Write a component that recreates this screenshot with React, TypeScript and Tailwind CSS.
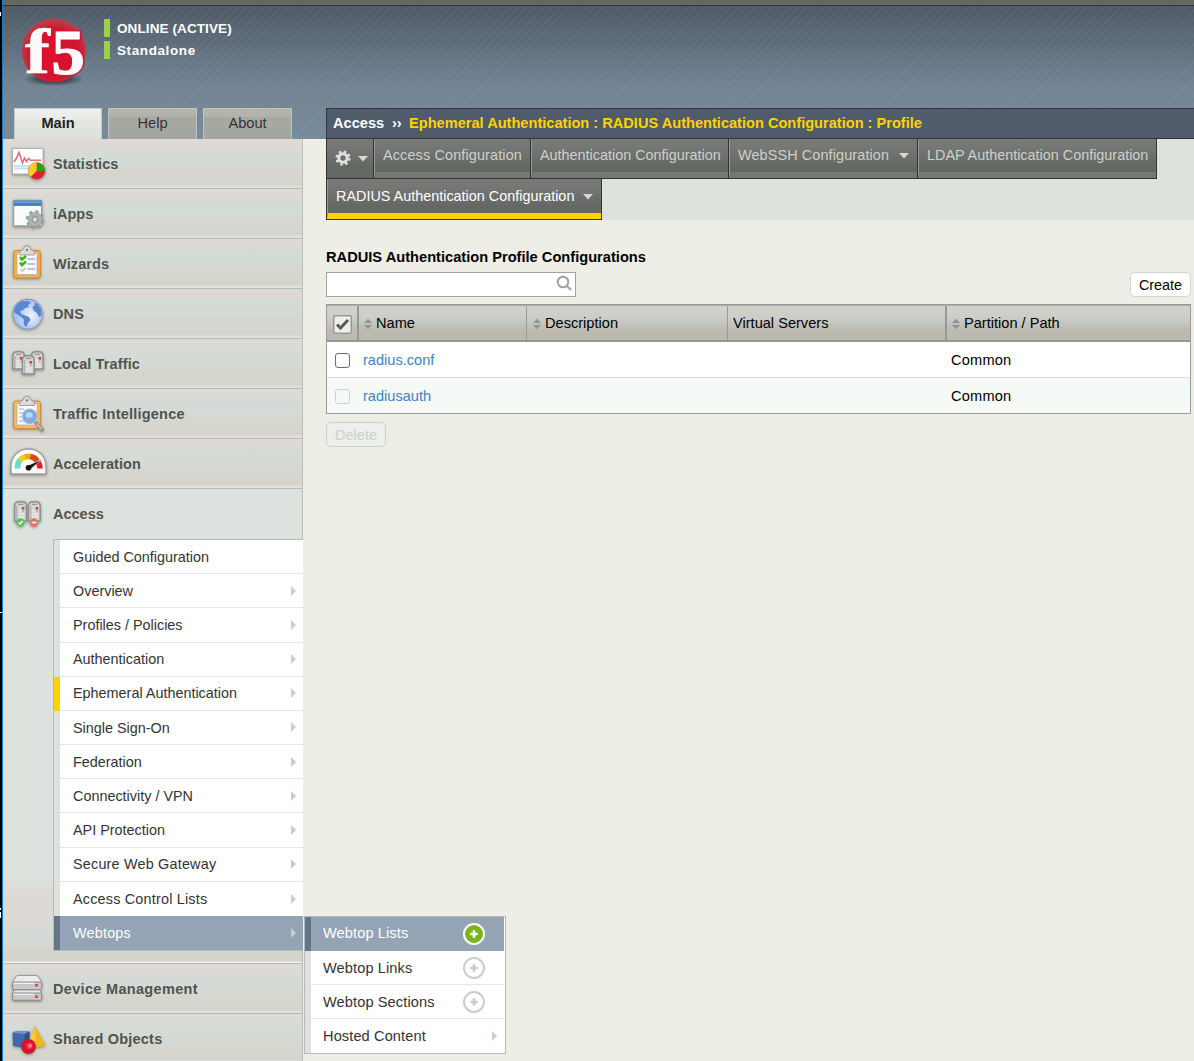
import React from "react";

const svgProps = { width: 42, height: 48, viewBox: "0 0 42 48", className: "shrink-0 drop-shadow-[0px_1px_1.5px_rgba(0,0,0,0.35)]" };

function Server({ x, y, h = 20 }: { x: number; y: number; h?: number }) {
  return (
    <g transform={`translate(${x} ${y})`}>
      <path d={`M.7 ${h} V4.5 Q1.4 .7 5 .7 H8.5 Q11.8 .7 12.4 4.5 V${h} Z`} fill="#d6d6d5" stroke="#8f8f8f" strokeWidth="1.5" />
      <path d={`M2.8 5 V${h - 1}`} stroke="#b4b4b4" strokeWidth="1.6" />
      <path d="M4 10 H9 M4 13 H10 M4 16 H10" stroke="#efefef" strokeWidth="1.2" />
      <path d="M4 3.4 H9.5" stroke="#9a9a9a" strokeWidth="1.4" />
      <rect x="7.8" y="6" width="2.6" height="2.6" fill="#ee3348" />
      <rect x="8.2" y="9.6" width="1.8" height="1.2" fill="#70c247" />
    </g>
  );
}

function Clipboard({ y = 0, frame = "#fbad42" }: { y?: number; frame?: string }) {
  return (
    <g transform={`translate(0 ${y})`}>
      <rect x="5.6" y="11.5" width="26.8" height="27.5" rx="2.5" fill={frame} stroke="#cf8a35" strokeWidth="1" />
      <path d="M9 14 H29 V35.5 H9 Z" fill="#fbfbff" stroke="#a8a7b0" strokeWidth=".7" />
      <path d="M11.5 16 V13.5 Q12.5 11.5 15 10.5 Q16 6.7 19 6.7 Q22 6.7 23 10.5 Q25.5 11.5 26.5 13.5 V16 Z" fill="#dadada" stroke="#9b9b9b" strokeWidth=".9" />
      <circle cx="19" cy="10.8" r="1.1" fill="#6b6b6b" />
    </g>
  );
}

const icons: Record<string, React.ReactNode> = {
  statistics: (
    <svg {...svgProps}>
      <rect x="4.5" y="9.5" width="30.5" height="25.5" fill="#fff" stroke="#b0b0b0" />
      <path d="M6 27 H34 M6 29.5 H34" stroke="#cde0ef" strokeWidth="1.8" />
      <path d="M6 23 L8.5 19 L11 13.5 L14.5 24 L16.5 19 L18.5 22.5 L20.5 19.5 L22.5 21.3 H33" fill="none" stroke="#e0707a" strokeWidth="1.6" />
      <circle cx="28.7" cy="32" r="8.6" fill="#dd2038" stroke="#b3a07c" strokeWidth=".6" />
      <path d="M28.7 32 V23.5 A8.5 8.5 0 0 1 37.2 32 Z" fill="#2aa316" />
      <path d="M28.7 32 V23.5 A8.5 8.5 0 0 0 22.7 38 Z" fill="#f6cc29" />
    </svg>
  ),
  iapps: (
    <svg {...svgProps}>
      <rect x="5.6" y="11.5" width="28" height="25.5" rx="1" fill="#fbfcfd" stroke="#9a9fa3" strokeWidth="1.4" />
      <path d="M5.5 11.5 H33.7 V17 H5.5 Z" fill="#4486ca" />
      <path d="M6 13 H33" stroke="#6ba7de" strokeWidth="1.4" />
      <circle cx="27" cy="30.5" r="7.9" fill="none" stroke="#93a09f" strokeWidth="2.6" strokeDasharray="3.3 2.9" />
      <circle cx="27" cy="30.5" r="7" fill="#a9b4b3" stroke="#93a09f" strokeWidth=".7" />
      <circle cx="27" cy="30.5" r="3" fill="#c3cbca" stroke="#849190" />
      <circle cx="27" cy="30.5" r="1.3" fill="#dfe4e3" />
    </svg>
  ),
  wizards: (
    <svg {...svgProps}>
      <Clipboard />
      <path d="M19.5 20 H27 M19.5 25 H27 M19.5 30 H27" stroke="#b9c2e6" strokeWidth="2" />
      <path d="M12 18 L14 20.5 L18 17 M12 23.5 L14 26 L18 22.5" fill="none" stroke="#3bb514" strokeWidth="2.8" />
      <path d="M12.5 30 L14.5 32 L17.5 29" fill="none" stroke="#cbcbcb" strokeWidth="1.8" />
    </svg>
  ),
  dns: (
    <svg {...svgProps}>
      <defs>
        <radialGradient id="globe" cx=".6" cy=".55" r=".6">
          <stop offset="0" stopColor="#f0f5ff" />
          <stop offset="1" stopColor="#9ab6ee" />
        </radialGradient>
      </defs>
      <circle cx="19.7" cy="25.2" r="14.8" fill="url(#globe)" stroke="#8f9cb8" strokeWidth="1.1" />
      <path d="M6 23 Q7 15 13 12.5 L20 12 L23 14 L20 16 L21 18 L17 19 L14 22 L12 21.5 L13 25 L16 26 L21 28 L22.5 31 L20 34 L18.5 38 L16 36 L15.5 30 L11 26.5 Z M26 13.5 L30 15.5 L33 20 L33.5 27 L31 28 L29 24 L25.5 21.5 L24.5 18 L27 16 Z" fill="#5a85d2" />
    </svg>
  ),
  localTraffic: (
    <svg {...svgProps}>
      <Server x={4} y={12} h={18} />
      <Server x={22.7} y={12} h={18} />
      <Server x={13.7} y={16} h={19} />
    </svg>
  ),
  intelligence: (
    <svg {...svgProps}>
      <Clipboard y={0.5} frame="#f9b863" />
      <path d="M11 20 H16 M11 24 H16 M11 28 H16 M11 32 H18" stroke="#b7c6e5" strokeWidth="1.6" />
      <path d="M28 34 L34 40.5" stroke="#8f8f8f" strokeWidth="4" strokeLinecap="round" />
      <path d="M28.5 34.5 L33.5 40" stroke="#c4c4c4" strokeWidth="1.8" />
      <circle cx="21.7" cy="27.3" r="7" fill="#83b1e6" stroke="#a9bad0" strokeWidth="1.8" />
      <circle cx="21.7" cy="27.3" r="5.6" fill="none" stroke="#6e9bd6" />
      <ellipse cx="21" cy="26" rx="3.4" ry="2.8" fill="#bdd8fa" />
    </svg>
  ),
  acceleration: (
    <svg {...svgProps}>
      <path d="M3 35 V28 C3 16.5 11 10 20.5 10 C30 10 38 16.5 38 28 V35 Z" fill="#fbfbf8" stroke="#a19f99" strokeWidth="1.4" />
      <g fill="none" strokeWidth="5.6">
        <path d="M9.6 29.5 A11.6 11.6 0 0 1 12 21" stroke="#66ddd3" />
        <path d="M11.6 21.6 A11.6 11.6 0 0 1 17.5 17.7" stroke="#e9cf2b" />
        <path d="M17 17.8 A11.6 11.6 0 0 1 22.5 17.6" stroke="#f3a818" />
        <path d="M22.3 17.6 A11.6 11.6 0 0 1 29.5 22" stroke="#df4518" />
        <path d="M30 23 A11.6 11.6 0 0 1 32.1 29.5" stroke="#ec1b2b" />
      </g>
      <path d="M19 27 L34.5 20 L22 30.5 Z" fill="#171717" stroke="#fff" strokeWidth=".5" />
      <circle cx="20.5" cy="28.8" r="2.8" fill="#111" />
    </svg>
  ),
  access: (
    <svg {...svgProps}>
      <Server x={6} y={12} h={20} />
      <Server x={19.8} y={12} h={20} />
      <circle cx="12.5" cy="33.5" r="4.2" fill="#62bd5b" />
      <path d="M10.5 33.5 L12 35 L14.7 32" fill="none" stroke="#fff" strokeWidth="1.3" />
      <circle cx="26" cy="33.5" r="4.2" fill="#ed6d65" />
      <path d="M23.7 33.5 H28.3" stroke="#fff" strokeWidth="1.5" />
    </svg>
  ),
  device: (
    <svg {...svgProps}>
      <path d="M10 11.5 H28 Q29.5 11.5 30.5 13 L33.7 18.5 H4.5 L7.7 13 Q8.5 11.5 10 11.5 Z" fill="#ececec" stroke="#9a9a9a" />
      <rect x="4.5" y="18" width="29.2" height="7.6" rx="1.5" fill="#c9c9c9" stroke="#8b8b8b" />
      <path d="M6.5 26 H31.5 L33.7 29.5 H4.5 Z" fill="#e9e9e9" stroke="#9a9a9a" />
      <rect x="4.5" y="29" width="29.2" height="7.3" rx="1.5" fill="#c9c9c9" stroke="#8b8b8b" />
      <path d="M6 19.4 H26 M6 30.4 H26" stroke="#eee" strokeWidth="1.4" />
      <rect x="27.2" y="20" width="2.6" height="2.5" fill="#ed2a42" />
      <rect x="27.2" y="31.5" width="2.6" height="2.5" fill="#ed2a42" />
    </svg>
  ),
  shared: (
    <svg {...svgProps}>
      <path d="M4.5 18.5 L9 17 L21.5 17.5 V31 L16.5 34 L5 32 Z" fill="#4567ac" />
      <path d="M4.5 18.5 L9 17 L21.5 17.5 L16.5 20.3 Z" fill="#7492cc" />
      <path d="M16.5 20.3 V34 L21.5 31 V17.5 Z" fill="#2f4d8e" />
      <path d="M27 12 L37.5 31 Q31 35 22 31.5 L21 27 Z" fill="#eab71f" />
      <path d="M27 12 L28 33.5 Q24 33 22 31.5 L21 27 Z" fill="#f3cb48" />
      <circle cx="20.5" cy="32.5" r="7.5" fill="#da122e" />
      <circle cx="21.5" cy="31.7" r="3.2" fill="#ee3c58" />
      <circle cx="22.2" cy="31.7" r="1.6" fill="#f98b9b" />
    </svg>
  ),
};

const itemBg =
  "bg-[linear-gradient(180deg,#dedad6_0,#dcd9d4_10px,#d5dbd7_12px,#d4dad6_26px,#d6d7d0_28px,#d5d4cc_46px,#dde2dd_47px,#dde2dd_49px)]";

function NavItem({ icon, label, cls = "h-[50px] border-b", tracking = "tracking-[0.1px]" }: { icon: string; label: string; cls?: string; tracking?: string }) {
  return (
    <div className={`flex shrink-0 items-start overflow-hidden border-[#b5bcb8] pl-[5px] ${itemBg} ${cls}`}>
      {icons[icon]}
      <span className={`ml-[3px] mt-[14px] text-[14.5px] font-bold leading-[22px] text-[#50544f] ${tracking}`}>{label}</span>
    </div>
  );
}

function Arrow({ cls = "" }: { cls?: string }) {
  return (
    <svg width="5" height="10" viewBox="0 0 5 10" className={`shrink-0 ${cls}`}>
      <path d="M0 0 L5 5 L0 10 Z" fill="#c9cecb" />
    </svg>
  );
}

function Plus({ active = false }: { active?: boolean }) {
  return (
    <svg width="22" height="22" viewBox="0 0 22 22" className="mr-[19px] shrink-0">
      <circle cx="11" cy="11" r="10" fill={active ? "#79b51c" : "#fff"} stroke={active ? "#fff" : "#c9cecb"} strokeWidth="2" />
      <path d="M11 7.3 V14.7 M7.3 11 H14.7" stroke={active ? "#fff" : "#c9cecb"} strokeWidth="2.6" />
    </svg>
  );
}

function Caret() {
  return (
    <svg width="10" height="6" viewBox="0 0 10 6" className="shrink-0">
      <path d="M0 0 H10 L5 5.5 Z" fill="#d5d7d4" />
    </svg>
  );
}

const tabBg = "bg-[linear-gradient(180deg,#7a7a79_0,#747773_9px,#6d706b_17px,#6b6b6b_22px,#646964_27px,#626762_33px)]";

function Tab({ label, width, caret = false, tracking = "" }: { label: string; width: string; caret?: boolean; tracking?: string }) {
  return (
    <div className={`h-10 border-r border-b border-[#333] ${width}`}>
      <div className={`flex h-full items-start border-b-[6px] border-l border-b-[#747974] border-l-[#999] pl-2 ${tabBg}`}>
        <span className={`mt-[6px] whitespace-nowrap text-[14.4px] leading-5 text-[#cdd0cc] ${tracking}`}>{label}</span>
        {caret && <span className="ml-[10px] mt-[14px] flex"><Caret /></span>}
      </div>
    </div>
  );
}

function Sort() {
  return (
    <svg width="8" height="12" viewBox="0 0 9 12" className="mr-1 mt-[2px] shrink-0">
      <path d="M0 5 L4.5 0 L9 5 Z M0 7 H9 L4.5 12 Z" fill="#929592" />
    </svg>
  );
}

const subItems = [
  "Guided Configuration", "Overview", "Profiles / Policies", "Authentication", "Ephemeral Authentication", "Single Sign-On",
  "Federation", "Connectivity / VPN", "API Protection", "Secure Web Gateway", "Access Control Lists", "Webtops",
];
const flyout = ["Webtop Lists", "Webtop Links", "Webtop Sections", "Hosted Content"];
const stripes =
  "bg-[repeating-linear-gradient(135deg,transparent_0,transparent_4px,rgba(255,255,255,0.035)_5px,rgba(255,255,255,0.035)_6px),linear-gradient(180deg,#4f5b67_0,#5e6c79_35px,#718494_80px,#778b9b_133px)]";
const headTab =
  "bg-[linear-gradient(180deg,#b5b5ae_0,#b4b2aa_7px,#a3a9a4_9px,#a6aaa5_14px,#aaa99f_17px,#a2a7a1_20px)]";

export default function App() {
  return (
    <div className="flex h-[1061px] w-[1194px] overflow-hidden bg-[#eeeee6] font-['Liberation_Sans',Arial,sans-serif] text-[14.6px] text-black">
      <div className="flex w-[3px] shrink-0 flex-col border-r border-[#167bc8] bg-black">
        <i className="mt-3 h-1 w-px bg-white" />
        <i className="mt-[596px] h-px w-[2px] bg-white" />
        <i className="mt-[295px] h-[2px] w-px bg-white" />
        <i className="mt-[2px] h-[6px] w-px bg-white" />
      </div>
      <div className="flex min-w-0 flex-1 flex-col">
        <div className="h-[6px] shrink-0 border-b border-[#30343a] bg-[#656963]" />
        <header className={`flex h-[133px] shrink-0 ${stripes}`}>
          <div className="flex w-[323px] shrink-0 flex-col">
            <div className="flex h-[102px]">
              <svg width="74" height="80" viewBox="0 0 74 80" className="ml-[13px] mt-[6px] shrink-0">
                <defs>
                  <radialGradient id="ball" cx=".5" cy=".55" r=".56">
                    <stop offset="0" stopColor="#e30f2e" />
                    <stop offset=".7" stopColor="#d01630" />
                    <stop offset="1" stopColor="#b5484c" />
                  </radialGradient>
                  <radialGradient id="shade">
                    <stop offset=".3" stopColor="#222c35" stopOpacity=".9" />
                    <stop offset="1" stopColor="#222c35" stopOpacity="0" />
                  </radialGradient>
                </defs>
                <ellipse cx="38" cy="67" rx="30" ry="7" fill="url(#shade)" />
                <circle cx="38" cy="38.5" r="32" fill="url(#ball)" />
                <g fontFamily="Liberation Serif, serif" fontWeight="bold" fill="#fbfbfb" stroke="#fbfbfb">
                  <text transform="translate(9 61) scale(1.17 1)" fontSize="64" strokeWidth=".6">f</text>
                  <text transform="translate(35.5 61.5) scale(1.04 1)" fontSize="64" stroke="#d01630" strokeWidth="4">5</text>
                  <text transform="translate(35.5 61.5) scale(1.04 1)" fontSize="64" strokeWidth="1.2">5</text>
                </g>
              </svg>
              <div className="ml-[14px] mt-[13px] flex flex-col gap-1 text-[13.5px] font-bold leading-[18px] text-white">
                <div className="h-[18px] border-l-[6px] border-[#9bcf4e] pl-[7px] leading-[19px] tracking-[0.1px]">ONLINE (ACTIVE)</div>
                <div className="h-[18px] border-l-[6px] border-[#9bcf4e] pl-[7px] leading-[19px] tracking-[0.6px]">Standalone</div>
              </div>
            </div>
            <div className="flex h-[31px] pl-[11px] text-center leading-[28px] text-[#333]">
              <div className="h-[31px] w-[88px] border border-b-0 border-[#c6c9c5] bg-[linear-gradient(180deg,#eef0f0_0,#ecebe5_8px,#e2e6e0_13px,#e5e6df_18px,#dde2df_22px)] font-bold text-[#222]">Main</div>
              <div className={`ml-[6px] w-[89px] border border-b-0 border-[#bfc3bd] ${headTab}`}>Help</div>
              <div className={`ml-[6px] w-[89px] border border-b-0 border-[#bfc3bd] ${headTab}`}>About</div>
            </div>
          </div>
          <div className="mt-[102px] flex h-[31px] flex-1 whitespace-nowrap border border-r-0 border-[#333] bg-[#505c6a] pl-[6px] font-bold leading-[28px] text-white">
            <span className="w-[59px]">Access</span>
            <span className="w-[17px]">››</span>
            <span className="text-[#ffd200]">Ephemeral Authentication : RADIUS Authentication Configuration : Profile</span>
          </div>
        </header>

        <div className="flex min-h-0 flex-1">
          <nav className="flex w-[300px] shrink-0 flex-col border-r border-[#b8bdb8] bg-[#dde2de]">
            <NavItem icon="statistics" label="Statistics" />
            <NavItem icon="iapps" label="iApps" tracking="tracking-[0px]" />
            <NavItem icon="wizards" label="Wizards" />
            <NavItem icon="dns" label="DNS" />
            <NavItem icon="localTraffic" label="Local Traffic" tracking="tracking-[0.12px]" />
            <NavItem icon="intelligence" label="Traffic Intelligence" tracking="tracking-[0.22px]" />
            <NavItem icon="acceleration" label="Acceleration" tracking="tracking-[0.08px]" />
            <div className="h-[475px] shrink-0 border-b border-[#b5bcb8] bg-[linear-gradient(180deg,#dde2de_0,#dde2de_390px,#dedad6_402px,#dcd9d4_435px,#d5dbd7_438px,#d4dad6_455px,#d6d5cd_460px,#d5d4cc_472px,#f0f2f0_473px)]">
              <div className="flex h-[50px] items-start pl-[5px]">
                {icons.access}
                <span className="ml-[3px] mt-[14px] text-[14.5px] font-bold leading-[22px] text-[#50544f]">Access</span>
              </div>
              <div className="relative ml-[50px] flex h-[412px] w-[250px] flex-col border border-r-0 border-[#b4bab6] bg-white text-[#333]">
                {subItems.map((s, i) => {
                  const active = i === 11;
                  return (
                    <div key={s} className={`flex flex-1 items-center border-l-[6px] pr-[7px] ${active ? "border-[#62758a] bg-[#94a4b5] text-white" : i === 4 ? "border-[#ffd200]" : "border-[#dde2de]"}`}>
                      <div className={`-mr-[7px] flex h-full flex-1 items-center pl-[13px] pr-[7px] ${i < 10 ? "border-b border-[#e3e7e4]" : ""}`}>
                        <span className={`flex-1 pt-[2px] text-[14.4px] ${i > 8 ? "tracking-[0.2px]" : ""}`}>{s}</span>
                        {i > 0 && <Arrow />}
                      </div>
                    </div>
                  );
                })}
                <div className="absolute left-[250px] top-[376px] z-10 flex h-[138px] w-[202px] flex-col border border-[#b4bab6] bg-white pr-px">
                  {flyout.map((s, i) => (
                    <div key={s} className={`flex flex-1 items-center border-l-[6px] ${i === 0 ? "border-[#62758a] bg-[#94a4b5] text-white" : "border-[#dde2de]"}`}>
                      <div className={`flex h-full flex-1 items-center pl-[12px] ${i === 1 || i === 2 ? "border-b border-[#e3e7e4]" : ""}`}>
                        <span className={`flex-1 text-[14.6px] tracking-[0.1px] ${i === 0 ? "" : i === 3 ? "pt-px" : "pt-[2px]"}`}>{s}</span>
                        {i < 3 ? <Plus active={i === 0} /> : <Arrow cls="mr-[7px]" />}
                      </div>
                    </div>
                  ))}
                </div>
              </div>
            </div>
            <NavItem icon="device" label="Device Management" tracking="tracking-[0.32px]" />
            <NavItem icon="shared" label="Shared Objects" cls="h-[50px]" tracking="tracking-[0.22px]" />
          </nav>

          <main className="ml-[23px] min-w-0 flex-1">
            <div className="h-[81px] border-l border-[#333] bg-[#dde2dd]">
              <div className="flex h-10">
                <div className="h-10 w-[47px] border-r border-b border-[#333]">
                  <div className={`flex h-full items-center gap-[7px] pl-2 ${tabBg}`}>
                    <svg width="16" height="16" viewBox="0 0 16 16" className="-mt-[2px]">
                      <g transform="translate(8 8)" fill="none" stroke="#e2e3e1">
                        <circle r="4.2" strokeWidth="3" />
                        <circle r="6.5" strokeWidth="2.2" strokeDasharray="2.6 2.505" />
                      </g>
                    </svg>
                    <span className="mt-[1px] flex"><Caret /></span>
                  </div>
                </div>
                <Tab label="Access Configuration" width="w-[157px]" tracking="tracking-[0.15px]" />
                <Tab label="Authentication Configuration" width="w-[198px]" />
                <Tab label="WebSSH Configuration" width="w-[189px]" caret tracking="tracking-[0.13px]" />
                <Tab label="LDAP Authentication Configuration" width="w-[239px]" />
              </div>
              <div className="h-[41px] w-[275px] border-r border-b border-[#333]">
                <div className={`flex h-full items-start border-b-[6px] border-l border-b-[#ffd200] border-l-[#999] pl-2 ${tabBg}`}>
                  <span className="mt-[7px] whitespace-nowrap text-[14.4px] leading-5 text-white">RADIUS Authentication Configuration</span>
                  <span className="ml-[9px] mt-[15px] flex"><Caret /></span>
                </div>
              </div>
            </div>

            <div className="pr-[3px]">
              <h1 className="pt-[27px] text-[14.65px] font-bold leading-5">RADUIS Authentication Profile Configurations</h1>
              <div className="mt-[5px] flex h-[25px] justify-between">
                <div className="flex w-[250px] items-center justify-end border border-[#a0a3a0] bg-white pr-[3px]">
                  <svg width="16" height="16" viewBox="0 0 16 16" fill="none" stroke="#9fa29f" strokeWidth="2" className="-mt-[3px]">
                    <circle cx="7" cy="7" r="5.3" />
                    <path d="M10.8 10.8 L15 15" />
                  </svg>
                </div>
                <button className="w-[61px] rounded-[5px] border border-[#d1d5d2] bg-white text-[14.4px] leading-[24px]">Create</button>
              </div>
              <div className="mt-[7px] border border-[#999c99]">
                <div className="flex h-[37px] border-b-2 border-[#969896] border-t border-t-[#aaa] bg-[linear-gradient(180deg,#d5d3cb_0,#cecfc9_8px,#c8ccc8_13px,#c3c6c0_17px,#c0beb2_22px,#bcbab0_27px,#b9bab2_34px)] leading-[34px]">
                  <div className="w-[32px] border-r-2 border-[#969896] pl-[6px] pt-[9px]">
                    <svg width="19" height="19" viewBox="0 0 19 19">
                      <rect x=".75" y=".75" width="17.5" height="17.5" rx="1" fill="#eeeeec" stroke="#969995" strokeWidth="1.5" />
                      <path d="M4 9.5 L7.5 13 L15 5" fill="none" stroke="#5b5b59" strokeWidth="3" />
                    </svg>
                  </div>
                  <div className="flex w-[168px] items-center border-r border-[#999c99] pl-[5px]"><Sort />Name</div>
                  <div className="flex w-[201px] items-center border-r border-[#999c99] pl-[6px]"><Sort />Description</div>
                  <div className="w-[219px] border-r-2 border-[#969896] pl-[5px]">Virtual Servers</div>
                  <div className="flex items-center pl-[5px]"><Sort />Partition / Path</div>
                </div>
                <div className="flex h-[36px] items-center border-b border-[#d8ddda] bg-white">
                  <i className="ml-2 mt-px h-[15px] w-[15px] rounded-[3px] border border-[#6b6e6b] bg-white" />
                  <span className="ml-[13px] w-[588px] pt-[2px] text-[#3b84c4]">radius.conf</span>
                  <span className="pt-[2px] tracking-[0.2px]">Common</span>
                </div>
                <div className="flex h-[35px] items-center bg-[#f6faf7]">
                  <i className="ml-2 mt-px h-[15px] w-[15px] rounded-[3px] border border-[#cfd3d0]" />
                  <span className="ml-[13px] w-[588px] pt-[2px] text-[#3b84c4]">radiusauth</span>
                  <span className="pt-[2px] tracking-[0.2px]">Common</span>
                </div>
              </div>
              <button className="mt-2 h-[25px] w-[60px] rounded-[5px] border border-[#ccd1ce] bg-[#ecefeb] leading-[24px] text-[#cdd1ce]">Delete</button>
            </div>
          </main>
        </div>
      </div>
    </div>
  );
}
